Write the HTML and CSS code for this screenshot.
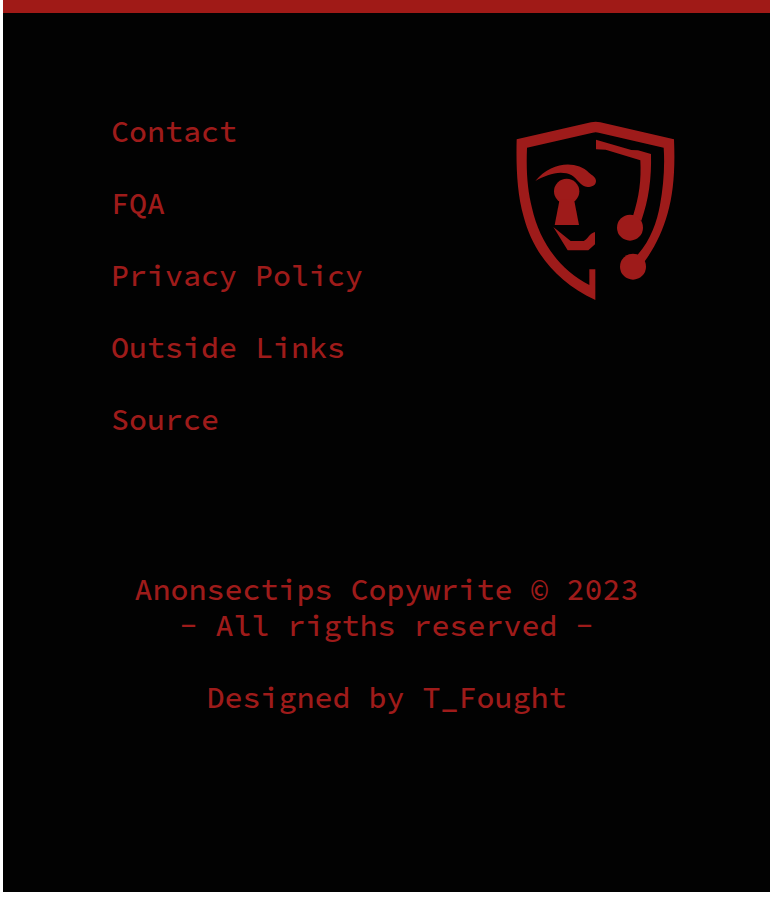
FILE: index.html
```html
<!DOCTYPE html>
<html lang="en">
<head>
<meta charset="utf-8">
<meta name="viewport" content="width=device-width, initial-scale=1">
<title>Anonsectips</title>
<link rel="stylesheet" href="styles.css">
</head>
<body>
<footer class="footer">
  <div class="footer-top">
    <nav class="links" aria-label="Footer">
      <a href="#contact">Contact</a>
      <a href="#fqa">FQA</a>
      <a href="#privacy">Privacy Policy</a>
      <a href="#links">Outside Links</a>
      <a href="#source">Source</a>
    </nav>
    <svg class="logo" viewBox="33 33 480 540" aria-hidden="true">
      <path d="M35 88 L258 37 Q272 34 286 37 L507 88 C511 180 505 250 488 310 C473 365 447 417 418 455 L396 440 L399 433 C437 390 456 335 465 285 C475 230 480 170 476 113 L281 68 Q272 65 263 68 L66 113 C63 190 68 240 81 294 C104 396 163 478 253 525 L253 478 L271 478 L271 570 C150 513 84 425 56 320 C36 250 33 170 35 88 Z"/>
      <circle cx="384" cy="470" r="39"/>
      <path d="M273 89 L379 120 L399 121 L438 132 C440 205 431 270 409 332 L384 318 C403 260 409 210 406 151 L302 119 L273 118 Z"/>
      <circle cx="375" cy="353" r="39"/>
      <path d="M91 213 C140 154 214 151 252 188 C262 196 273 202 273 213 C273 227 259 231 248 231 C226 230 218 207 200 196 C166 179 126 194 91 213 Z"/>
      <circle cx="185" cy="244" r="38"/>
      <path d="M164 268 L207 268 L222 345 L149 345 Z"/>
      <path d="M145 351 L197 393 L236 393 C247 389 253 370 270 366 L270 403 L250 421 L188 421 Z"/>
    </svg>
  </div>
  <div class="legal">
    <p>Anonsectips Copywrite © 2023<br>- All rigths reserved -</p>
    <p>Designed by T_Fought</p>
  </div>
</footer>
</body>
</html>
```
FILE: styles.css
```css
body {
  margin: 0;
  background: #fff;
}

.footer {
  margin: 0 3px;
  padding: 100px 0 177px;
  border-top: 13px solid #a01a17;
  background: #020202;
  color: #9e1b1a;
  font: 500 30px/36px "Source Code Pro", "Liberation Mono", monospace;
}

.footer-top {
  display: flex;
  justify-content: space-between;
  align-items: flex-start;
  padding: 0 94px 0 108px;
}

.links {
  display: flex;
  flex-direction: column;
  gap: 36px;
}

.links a {
  color: inherit;
  text-decoration: none;
}

.logo {
  width: 160px;
  height: 180px;
  margin-top: 8px;
  fill: #9e1b1a;
}

.legal {
  display: flex;
  flex-direction: column;
  gap: 36px;
  margin-top: 134px;
  text-align: center;
}

.legal p {
  margin: 0;
}
```
